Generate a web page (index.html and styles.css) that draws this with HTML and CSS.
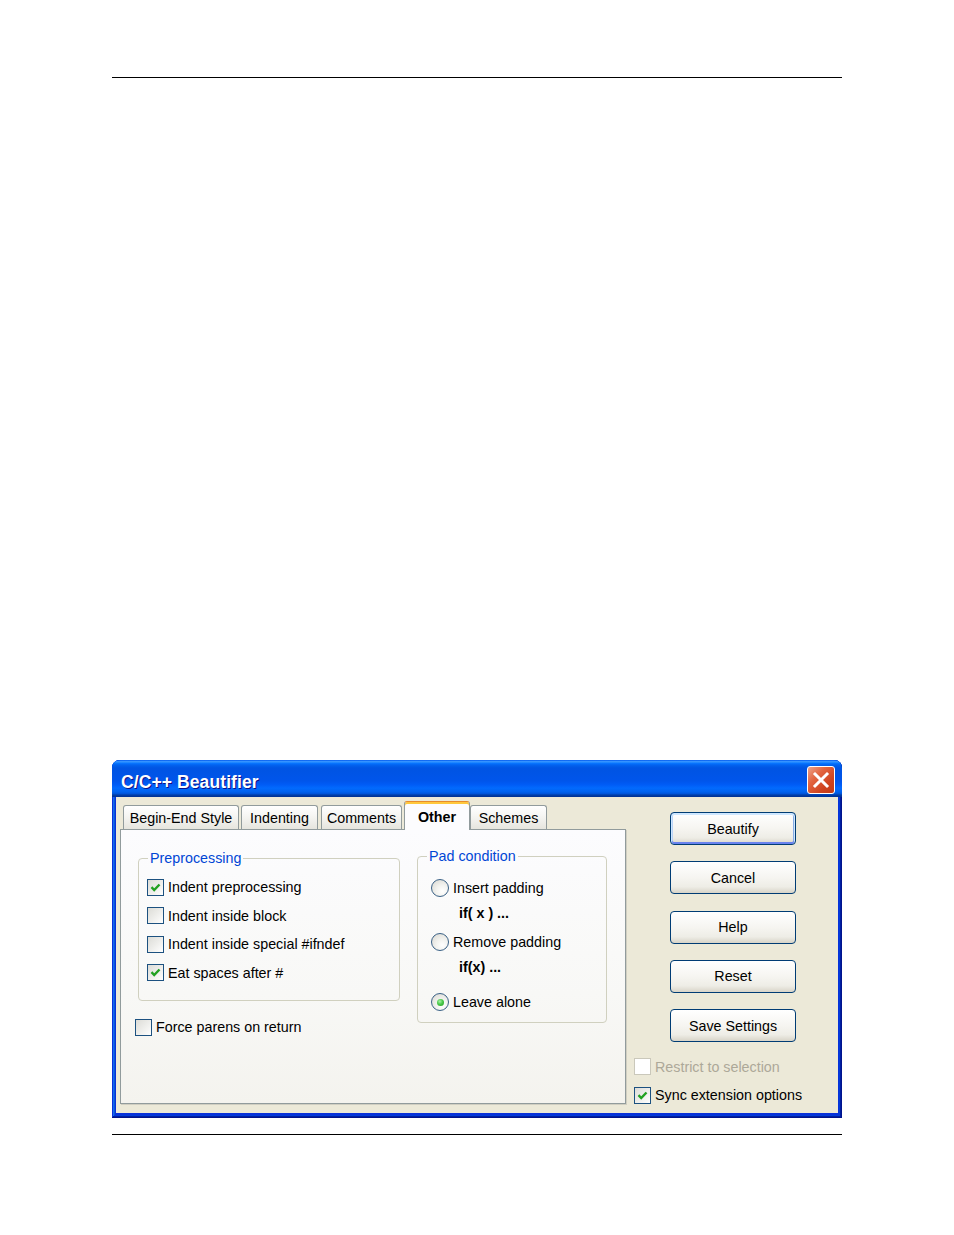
FILE: index.html
```html
<!DOCTYPE html>
<html>
<head>
<meta charset="utf-8">
<title>C/C++ Beautifier</title>
<link rel="stylesheet" href="styles.css">
</head>
<body>
<div class="page">
  <div class="rule"></div>
  <div class="window">
    <div class="titlebar">
      <span class="title">C/C++ Beautifier</span>
      <span class="close"><svg width="26" height="26" viewBox="0 0 26 26"><path d="M7 7 L19 19 M19 7 L7 19" stroke="#fff" stroke-width="3" stroke-linecap="square"/></svg></span>
    </div>
    <div class="client">
      <div class="tabctl">
        <div class="tabs">
          <div class="tab w1">Begin-End Style</div>
          <div class="tab w2">Indenting</div>
          <div class="tab w3">Comments</div>
          <div class="tab sel">Other</div>
          <div class="tab w5">Schemes</div>
        </div>
        <div class="panel">
          <div class="pleft">
            <fieldset class="group g-pre">
              <legend>Preprocessing</legend>
              <div class="gbody pre-body">
                <div class="row r28"><span class="cb on"><svg width="15" height="15" viewBox="0 0 15 15"><path d="M3.5 7.2 L6.2 10 L11.5 4.5" fill="none" stroke="#21A121" stroke-width="2.4"/></svg></span>Indent preprocessing</div>
                <div class="row r28"><span class="cb"></span>Indent inside block</div>
                <div class="row r28"><span class="cb"></span>Indent inside special #ifndef</div>
                <div class="row r28"><span class="cb on"><svg width="15" height="15" viewBox="0 0 15 15"><path d="M3.5 7.2 L6.2 10 L11.5 4.5" fill="none" stroke="#21A121" stroke-width="2.4"/></svg></span>Eat spaces after #</div>
              </div>
            </fieldset>
            <div class="row force"><span class="cb"></span>Force parens on return</div>
          </div>
          <div class="pright">
            <fieldset class="group g-pad">
              <legend>Pad condition</legend>
              <div class="gbody pad-body">
                <div class="row r26"><span class="radio"></span>Insert padding</div>
                <div class="code">if( x ) ...</div>
                <div class="row r26 m4"><span class="radio"></span>Remove padding</div>
                <div class="code">if(x) ...</div>
                <div class="row r26 m10"><span class="radio on"><span class="dot"></span></span>Leave alone</div>
              </div>
            </fieldset>
          </div>
        </div>
      </div>
      <div class="side">
        <div class="btn default">Beautify</div>
        <div class="btn">Cancel</div>
        <div class="btn">Help</div>
        <div class="btn">Reset</div>
        <div class="btn">Save Settings</div>
        <div class="row restrict disabled"><span class="cb dis"></span>Restrict to selection</div>
        <div class="row sync"><span class="cb on"><svg width="15" height="15" viewBox="0 0 15 15"><path d="M3.5 7.2 L6.2 10 L11.5 4.5" fill="none" stroke="#21A121" stroke-width="2.4"/></svg></span>Sync extension options</div>
      </div>
    </div>
  </div>
  <div class="rule bottom"></div>
</div>
</body>
</html>
```

FILE: styles.css
```css
html, body {
  margin: 0;
  padding: 0;
  background: #ffffff;
}
body {
  font-family: "Liberation Sans", Arial, sans-serif;
  font-size: 14.3px;
  color: #000;
}
.page {
  width: 730px;
  margin-left: 112px;
  padding-top: 77px;
}
.rule {
  height: 1px;
  background: #000;
}
.rule.bottom {
  margin-top: 16px;
}
.window {
  margin-top: 682px;
  width: 730px;
  height: 358px;
  box-sizing: border-box;
  padding: 0 4px 5px 4px;
  border-radius: 8px 8px 0 0;
  background: #0831d9;
  box-shadow: inset -1px -1px #00138c, inset 1px 1px #0831d9, inset -2px -2px #001ea0, inset 2px 2px #166aee, inset -3px -3px #003bda, inset 3px 3px #0855dd;
  display: flex;
  flex-direction: column;
}
.titlebar {
  height: 37px;
  margin: 0 -4px;
  padding: 0 7px 0 9px;
  border-radius: 8px 8px 0 0;
  background: linear-gradient(to bottom, #0058ee 0%, #3593ff 4%, #288eff 6%, #127dff 8%, #036ffc 10%, #0262ee 14%, #0057e5 20%, #0054e3 24%, #0055eb 56%, #005bf5 66%, #026afe 76%, #0062ef 86%, #0052d6 92%, #0040ab 94%, #003092 100%);
  display: flex;
  align-items: flex-start;
  justify-content: space-between;
}
.title {
  color: #fff;
  font-weight: bold;
  font-size: 17.5px;
  line-height: 20px;
  margin-top: 12px;
  text-shadow: 1px 1px #0f1089;
  letter-spacing: 0.1px;
}
.close {
  margin-top: 6px;
  width: 28px;
  height: 28px;
  box-sizing: border-box;
  border: 1px solid #fff;
  border-radius: 3px;
  background: linear-gradient(135deg, #eda38a 0%, #e2643f 35%, #cf4420 70%, #c13a17 100%);
  display: flex;
  align-items: center;
  justify-content: center;
}
.close svg { display: block; }
.client {
  flex: 1;
  background: #ece9d8;
  display: flex;
  padding: 5px 0 0 4px;
}
.tabctl {
  width: 506px;
  display: flex;
  flex-direction: column;
}
.tabs {
  height: 27px;
  display: flex;
  align-items: flex-end;
  padding-left: 3px;
  position: relative;
  z-index: 1;
}
.tab {
  height: 24px;
  box-sizing: border-box;
  border: 1px solid #919b9c;
  border-bottom: none;
  border-radius: 3px 3px 0 0;
  background: linear-gradient(to bottom, #ffffff 0%, #f5f5f2 45%, #e6e5de 100%);
  display: flex;
  align-items: center;
  justify-content: center;
  margin-right: 2px;
  white-space: nowrap;
}
.w1 { width: 116px; }
.w2 { width: 77px; margin-right: 3px; }
.w3 { width: 81px; }
.w5 { width: 77px; }
.tab.sel {
  width: 66px;
  height: 29px;
  margin-right: 0;
  margin-bottom: -1px;
  background: #fcfcfe;
  border-top: 1px solid #e68b2c;
  box-shadow: inset 0 2px #ffc83c;
  padding-top: 1px;
  font-weight: bold;
}
.panel {
  height: 275px;
  box-sizing: border-box;
  border: 1px solid #919b9c;
  background: linear-gradient(to bottom, #fcfcfe 0%, #f8f8f6 60%, #f4f3ee 100%);
  box-shadow: 1px 1px 0 #d0cec1;
  display: flex;
  align-items: flex-start;
}
.pleft {
  margin-left: 14px;
  width: 265px;
}
.pright {
  margin-left: 17px;
}
.group {
  margin: 0;
  padding: 0;
  border: 1px solid #d0d0bf;
  border-radius: 4px;
  min-width: 0;
}
.group legend {
  margin-left: 9px;
  padding: 0 2px;
  line-height: 17px;
  color: #0046d5;
}
.g-pre {
  margin: 20px 0 0 3px;
  width: 262px;
  box-sizing: border-box;
}
.pre-body {
  padding: 6px 0 13px 8px;
}
.g-pad {
  margin-top: 18px;
  width: 190px;
  box-sizing: border-box;
}
.pad-body {
  padding: 10px 0 7px 13px;
}
.row {
  display: flex;
  align-items: center;
  white-space: nowrap;
}
.r28 { height: 28.5px; }
.r26 { height: 26px; }
.m4 { margin-top: 4px; }
.m10 { margin-top: 10px; }
.code {
  height: 24px;
  line-height: 24px;
  padding-left: 28px;
  font-weight: bold;
}
.force {
  margin-top: 12px;
  height: 28px;
}
.cb {
  width: 17px;
  height: 17px;
  box-sizing: border-box;
  border: 1px solid #1c5180;
  background: linear-gradient(135deg, #dcdcd7 0%, #ededea 50%, #ffffff 100%);
  flex: none;
  margin-right: 4px;
  display: flex;
  align-items: center;
  justify-content: center;
}
.cb svg { display: block; }
.cb.dis {
  border-color: #cac8bb;
  background: #ffffff;
}
.radio {
  width: 18px;
  height: 18px;
  box-sizing: border-box;
  border-radius: 50%;
  border: 1px solid #3a6186;
  background: radial-gradient(circle at 65% 70%, #ffffff 0%, #f2f2ef 40%, #d7d6cf 100%);
  flex: none;
  margin-right: 4px;
  display: flex;
  align-items: center;
  justify-content: center;
}
.dot {
  width: 7px;
  height: 7px;
  border-radius: 50%;
  background: radial-gradient(circle at 40% 35%, #a3f2a3 0%, #4cc94c 45%, #1e9a1e 100%);
}
.side {
  margin-left: 8px;
  padding-top: 10px;
  display: flex;
  flex-direction: column;
}
.btn {
  width: 126px;
  height: 33px;
  margin-left: 36px;
  margin-bottom: 16.25px;
  box-sizing: border-box;
  border: 1px solid #003c74;
  border-radius: 4px;
  background: linear-gradient(to bottom, #ffffff 0%, #f6f5f1 50%, #eeede6 80%, #d8d4c8 100%);
  display: flex;
  align-items: center;
  justify-content: center;
  white-space: nowrap;
}
.btn:nth-child(5) {
  margin-bottom: 0;
}
.btn.default {
  box-shadow: inset 0 1px 0 1px #cee7ff, inset 0 -1px 0 1px #6982ee, inset 1px 0 0 1px #bcd4f6, inset -1px 0 0 1px #89ade4;
}
.restrict {
  margin-top: 10px;
  height: 29px;
}
.sync {
  height: 28px;
}
.disabled {
  color: #aca899;
}
```
